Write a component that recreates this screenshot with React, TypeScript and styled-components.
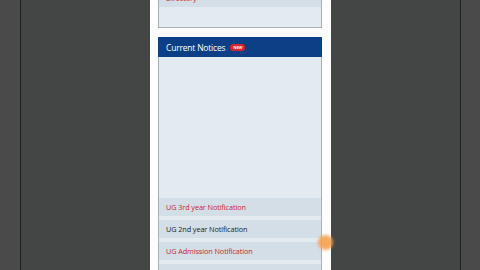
import styled, { createGlobalStyle } from "styled-components"

const GlobalStyle = createGlobalStyle`
  html, body {
    margin: 0;
    padding: 0;
    width: 480px;
    height: 270px;
    overflow: hidden;
    background: #434645;
    font-family: "Open Sans", "Liberation Sans", sans-serif;
  }
  #root {
    height: 270px;
  }
`

const Stage = styled.div`
  display: flex;
  height: 270px;
  width: 480px;
  position: relative;
`

const Gutter = styled.div`
  width: ${(p: { w: number }) => p.w}px;
  background: #4a4a4a;
`

const Rule = styled.div`
  width: 1px;
  background: #1e1f1f;
`

const Side = styled.div`
  flex: 1;
  background: #434645;
`

const Phone = styled.div`
  width: 181px;
  background: #fdfdfd;
  padding: 0 9px 0 8px;
  box-sizing: border-box;
  display: flex;
  flex-direction: column;
  gap: 9px;
  overflow: hidden;
`

const Card = styled.div`
  border: 1px solid #a8b0b6;
  background: #e4ebf0;
  display: flex;
  flex-direction: column;
`

const TopCard = styled(Card)`
  margin-top: -11px;
  height: 39px;
  flex-shrink: 0;
  box-sizing: border-box;
  border-top: none;
`

const NoticeCard = styled(Card)`
  flex: 1;
`

const Header = styled.div`
  height: 20px;
  flex-shrink: 0;
  background: #0c3f85;
  display: flex;
  align-items: center;
  gap: 5px;
  padding-left: 8px;
  color: #ffffff;
  font-size: 8.5px;
  letter-spacing: -0.2px;
  margin: -1px -1px 0;
`

const Badge = styled.span`
  background: #d9242c;
  color: #fff;
  font-size: 4px;
  font-weight: 700;
  border-radius: 4px;
  padding: 1px 3px;
  line-height: 5px;
`

const Body = styled.div`
  display: flex;
  flex-direction: column;
  gap: 4px;
  padding-top: 141px;
  flex: 1;
`

const Row = styled.div<{ red?: boolean }>`
  height: 18px;
  flex-shrink: 0;
  background: #d4dee6;
  display: flex;
  align-items: center;
  padding-left: 7px;
  font-size: 7.3px;
  letter-spacing: -0.1px;
  color: ${(p) => (p.red ? "#c8262e" : "#222")};
`

const Touch = styled.div`
  position: absolute;
  left: 318px;
  top: 235px;
  width: 15px;
  height: 15px;
  border-radius: 50%;
  background: #f5a04e;
  filter: blur(1.5px);
  opacity: 0.9;
`

export default function App() {
  return (
    <>
      <GlobalStyle />
      <Stage>
        <Gutter w={20} />
        <Rule />
        <Side />
        <Phone>
          <TopCard>
            <Row red>Directory</Row>
          </TopCard>
          <NoticeCard>
            <Header>
              Current Notices <Badge>NEW</Badge>
            </Header>
            <Body>
              <Row red>UG 3rd year Notification</Row>
              <Row>UG 2nd year Notification</Row>
              <Row red>UG Admission Notification</Row>
              <Row />
            </Body>
          </NoticeCard>
        </Phone>
        <Side />
        <Rule />
        <Gutter w={19} />
        <Touch />
      </Stage>
    </>
  )
}
